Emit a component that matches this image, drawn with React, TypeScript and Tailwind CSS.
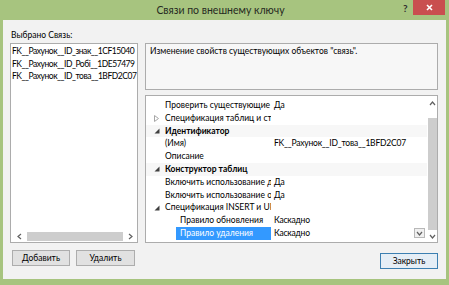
import React from 'react';

type Row = {
  label: string;
  value?: string;
  arrow?: 'open' | 'closed';
  bold?: boolean;
  sub?: boolean;
  selected?: boolean;
};

const rows: Row[] = [
  { label: 'Проверить существующие данные', value: 'Да' },
  { label: 'Спецификация таблиц и столбцов', arrow: 'closed' },
  { label: 'Идентификатор', arrow: 'open', bold: true },
  { label: '(Имя)', value: 'FK__Рахунок__ID_това__1BFD2C07' },
  { label: 'Описание' },
  { label: 'Конструктор таблиц', arrow: 'open', bold: true },
  { label: 'Включить использование для репликации', value: 'Да' },
  { label: 'Включить использование ограничения', value: 'Да' },
  { label: 'Спецификация INSERT и UPDATE', arrow: 'open' },
  { label: 'Правило обновления', value: 'Каскадно', sub: true },
  { label: 'Правило удаления', value: 'Каскадно', sub: true, selected: true },
];

const keys = [
  'FK__Рахунок__ID_знак__1CF15040',
  'FK__Рахунок__ID_Робі__1DE57479',
  'FK__Рахунок__ID_това__1BFD2C07',
];

const Arrow: React.FC<{ kind?: 'open' | 'closed' }> = ({ kind }) => {
  if (!kind) return null;
  if (kind === 'closed') {
    return (
      <svg width="5" height="7" viewBox="0 0 5 7">
        <path d="M0.5 0.5 L4.5 3.5 L0.5 6.5 Z" fill="none" stroke="#a6a6a6" strokeWidth="1" />
      </svg>
    );
  }
  return (
    <svg width="6" height="6" viewBox="0 0 6 6">
      <path d="M5.5 0.5 L5.5 5.5 L0.5 5.5 Z" fill="#404040" />
    </svg>
  );
};

const Chevron: React.FC<{ dir: 'up' | 'down' | 'left' | 'right' }> = ({ dir }) => {
  const d = {
    up: 'M1 5 L3.5 2 L6 5',
    down: 'M1 2 L3.5 5 L6 2',
    left: 'M5 1 L2 3.5 L5 6',
    right: 'M2 1 L5 3.5 L2 6',
  }[dir];
  return (
    <svg width="7" height="7" viewBox="0 0 7 7">
      <path d={d} fill="none" stroke="#606060" strokeWidth="1.2" />
    </svg>
  );
};

export default function App() {
  return (
    <div className="w-[449px] h-[285px] bg-[#a7c47f] flex flex-col font-['Lato',sans-serif] text-black overflow-hidden">
      {/* title bar */}
      <div className="h-[20px] flex items-start shrink-0">
        <div className="flex-1 pl-[38px] pt-[2px] text-center text-[10.5px] leading-[16px] text-[#262a22]">
          Связи по внешнему ключу
        </div>
        <div className="w-[10px] pt-[1px] text-[10px] font-bold leading-[14px] text-[#2f2f2f]">?</div>
        <div className="w-[32px] h-[15px] mr-[4px] bg-[#c94f4f] flex items-center justify-center">
          <svg width="7" height="7" viewBox="0 0 7 7">
            <path d="M1 1 L6 6 M6 1 L1 6" stroke="#ffffff" strokeWidth="1.6" />
          </svg>
        </div>
      </div>

      {/* client area */}
      <div className="flex-1 mx-[3px] mb-[6px] bg-[#f2f2f2] flex flex-col pl-[7px] pr-[8px] pt-[9px] text-[8.5px] leading-[13px]">
        <div className="h-[14px] pl-[1px]">Выбрано Связь:</div>

        <div className="flex gap-[7px] h-[200px]">
          {/* left list */}
          <div className="w-[128px] border border-[#acacac] bg-white flex flex-col">
            <div className="flex-1 pt-[1px]">
              {keys.map((k) => (
                <div
                  key={k}
                  className="h-[12.5px] leading-[12.5px] pl-[1px] whitespace-nowrap overflow-hidden tracking-[-0.45px]"
                >
                  {k}
                </div>
              ))}
            </div>
            <div className="h-[10px] mb-[1px] flex items-center">
              <div className="w-[16px] flex justify-center">
                <Chevron dir="left" />
              </div>
              <div className="flex-1 h-[9px] bg-[#cdcdcd]" />
              <div className="w-[14px] flex justify-center">
                <Chevron dir="right" />
              </div>
            </div>
          </div>

          {/* right column */}
          <div className="flex-1 flex flex-col gap-[5px]">
            <div className="h-[47px] border border-[#acacac] bg-[#f7f7f7] pl-[4px] pt-[1px]">
              Изменение свойств существующих объектов "связь".
            </div>
            <div className="flex-1 border border-[#acacac] bg-white flex">
              <div className="flex-1 pt-[3px]">
                {rows.map((r) => (
                  <div
                    key={r.label}
                    className={`h-[12.8px] leading-[12.8px] flex ${r.bold ? 'font-bold bg-[#f7f7f7]' : ''}`}
                  >
                    <div className="w-[125px] mr-[2px] flex whitespace-nowrap overflow-hidden">
                      {r.sub ? (
                        <>
                          <div className="w-[30px] shrink-0" />
                          <div
                            className={`flex-1 pl-[4px] ${r.selected ? 'bg-[#3399ff] text-white' : ''}`}
                          >
                            {r.label}
                          </div>
                        </>
                      ) : (
                        <>
                          <div className="w-[19px] shrink-0 flex items-center justify-center pl-[2px]">
                            <Arrow kind={r.arrow} />
                          </div>
                          <div>{r.label}</div>
                        </>
                      )}
                    </div>
                    <div className="flex-1 pl-[1px] flex items-center whitespace-nowrap overflow-hidden">
                      <span className="flex-1 tracking-[-0.2px]">{r.value}</span>
                      {r.selected && (
                        <div className="w-[11px] h-[10px] mr-[2px] border border-[#b8b8b8] bg-[#f0f0f0] flex items-center justify-center">
                          <Chevron dir="down" />
                        </div>
                      )}
                    </div>
                  </div>
                ))}
              </div>
              {/* vertical scrollbar */}
              <div className="w-[10px] flex flex-col items-center">
                <div className="h-[14px] flex items-center">
                  <Chevron dir="up" />
                </div>
                <div className="w-[9px] flex-1 bg-[#cdcdcd] mt-[8px]" />
                <div className="h-[12px] flex items-center">
                  <Chevron dir="down" />
                </div>
              </div>
            </div>
          </div>
        </div>

        {/* buttons */}
        <div className="flex items-start mt-[7px]">
          <button className="w-[58px] h-[16px] border border-[#adadad] bg-[#e1e1e1] text-[8.5px] leading-[14px] ml-[2px]">
            Добавить
          </button>
          <button className="w-[59px] h-[16px] border border-[#adadad] bg-[#e1e1e1] text-[8.5px] leading-[14px] ml-[6px]">
            Удалить
          </button>
          <div className="flex-1" />
          <button className="w-[58px] h-[16px] mt-[3px] border border-[#3c7fb1] bg-[#e5eef6] text-[8.5px] leading-[14px]">
            Закрыть
          </button>
        </div>
      </div>
    </div>
  );
}
